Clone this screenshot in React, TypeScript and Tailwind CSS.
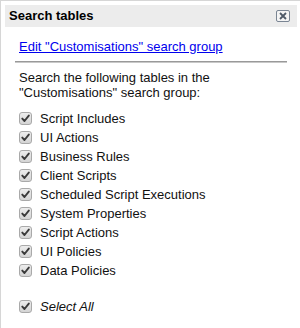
import React from "react";

const items = [
  "Script Includes",
  "UI Actions",
  "Business Rules",
  "Client Scripts",
  "Scheduled Script Executions",
  "System Properties",
  "Script Actions",
  "UI Policies",
  "Data Policies",
];

function Check() {
  return (
    <span className="inline-flex h-[13px] w-[13px] shrink-0 items-center justify-center rounded-[3px] border border-[#a9a9a9] bg-gradient-to-b from-[#ededed] to-[#d4d4d4]">
      <svg width="9" height="9" viewBox="0 0 9 9">
        <path d="M1.3 4.6 L3.5 7 L7.8 1.6" fill="none" stroke="#3a3a3a" strokeWidth="1.9" strokeLinecap="round" strokeLinejoin="round" />
      </svg>
    </span>
  );
}

export default function App() {
  return (
    <div className="h-[328px] w-[300px] overflow-hidden bg-white" style={{ fontFamily: '"Liberation Sans", Arial, sans-serif' }}>
      <div className="h-[340px] w-[310px] border border-[#d6d6d6] px-[4px] pt-[4px]">
        <div className="flex h-[22px] w-[292px] items-center justify-between bg-[#ececec] pl-[4px] pr-[7px]">
          <span className="text-[13px] font-bold text-black">Search tables</span>
          <span className="flex h-[12px] w-[14px] items-center justify-center rounded-[2px] border border-[#7a8593] bg-[#f4f4f4]">
            <svg width="8" height="8" viewBox="0 0 8 8">
              <path d="M1 1 L7 7 M7 1 L1 7" stroke="#4f5a68" strokeWidth="1.8" />
            </svg>
          </span>
        </div>
        <div className="pl-[14px]">
          <a href="#" className="mt-[12px] block text-[13px] leading-[15px] text-[#0000ee] underline">
            Edit "Customisations" search group
          </a>
          <div className="ml-[-4px] mt-[7px] h-[2px] w-[272px] border-t border-[#999] bg-[#c8c8c8]" />
          <p className="mt-[7px] text-[13px] leading-[15px] text-[#111]">
            Search the following tables in the
            <br />
            "Customisations" search group:
          </p>
          <div className="mt-[9px] flex flex-col">
            {items.map((t) => (
              <div key={t} className="flex h-[19px] items-center gap-[8px] text-[13px] text-[#111]">
                <Check />
                <span>{t}</span>
              </div>
            ))}
            <div className="mt-[17px] flex h-[19px] items-center gap-[8px] text-[13px] italic text-[#111]">
              <Check />
              <span>Select All</span>
            </div>
          </div>
        </div>
      </div>
    </div>
  );
}
